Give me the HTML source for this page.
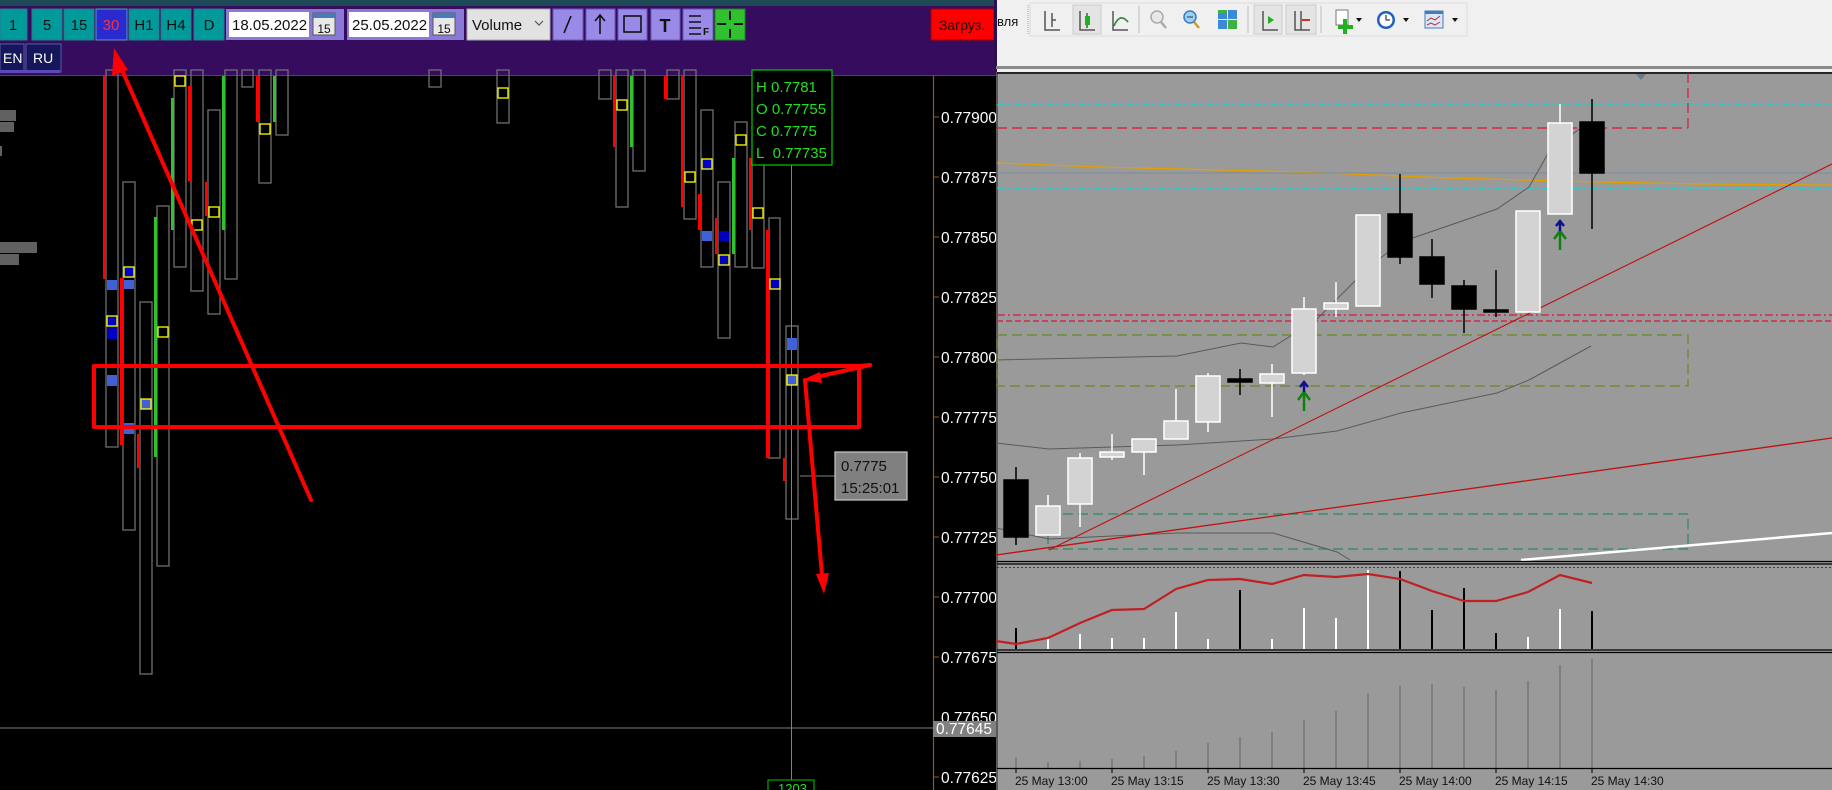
<!DOCTYPE html>
<html><head><meta charset="utf-8"><style>
html,body{margin:0;padding:0;width:1832px;height:790px;overflow:hidden;background:#000}
svg{display:block;font-family:"Liberation Sans","DejaVu Sans",sans-serif}
</style></head><body>
<svg width="1832" height="790" viewBox="0 0 1832 790" xmlns="http://www.w3.org/2000/svg">
<!-- LEFT PANEL -->
<rect x="0" y="0" width="996" height="790" fill="#000"/>
<rect x="0" y="0" width="996" height="6" fill="#1e4a58"/>
<rect x="0" y="6" width="996" height="69" fill="#360c5e"/>
<line x1="0" y1="75.5" x2="996" y2="75.5" stroke="#7a3a20" stroke-width="1"/>
<g font-size="15" text-anchor="middle" fill="#111">
<rect x="0" y="9" width="27" height="31" fill="#009a9a" stroke="#2a7a8a"/><text x="13" y="30">1</text>
<rect x="32" y="9" width="30" height="31" fill="#009a9a" stroke="#2a7a8a"/><text x="47" y="30">5</text>
<rect x="64" y="9" width="30" height="31" fill="#009a9a" stroke="#2a7a8a"/><text x="79" y="30">15</text>
<rect x="96" y="9" width="31" height="31" fill="#2a2ad0" stroke="#5a9aba"/><text x="111" y="30" fill="#ff3030">30</text>
<rect x="129" y="9" width="30" height="31" fill="#009a9a" stroke="#2a7a8a"/><text x="144" y="30">H1</text>
<rect x="161" y="9" width="30" height="31" fill="#009a9a" stroke="#2a7a8a"/><text x="176" y="30">H4</text>
<rect x="194" y="9" width="30" height="31" fill="#009a9a" stroke="#2a7a8a"/><text x="209" y="30">D</text>
</g>
<rect x="226" y="9" width="118" height="31" fill="#8a7ad8"/>
<rect x="229" y="12" width="80" height="25" fill="#fff"/>
<text x="232" y="30" font-size="15" fill="#111">18.05.2022</text>
<rect x="313" y="13" width="22" height="22" fill="#e8e8e8" stroke="#555"/><rect x="313" y="13" width="22" height="5" fill="#4a7ab8"/>
<text x="324" y="33" font-size="12" text-anchor="middle" fill="#111">15</text>
<rect x="347" y="9" width="117" height="31" fill="#8a7ad8"/>
<rect x="349" y="12" width="80" height="25" fill="#fff"/>
<text x="352" y="30" font-size="15" fill="#111">25.05.2022</text>
<rect x="433" y="13" width="22" height="22" fill="#e8e8e8" stroke="#555"/><rect x="433" y="13" width="22" height="5" fill="#4a7ab8"/>
<text x="444" y="33" font-size="12" text-anchor="middle" fill="#111">15</text>
<rect x="467" y="9" width="83" height="31" fill="#e2e2e2" stroke="#aaa"/>
<text x="472" y="30" font-size="15" fill="#111">Volume</text>
<path d="M535 21 l4 4 l4 -4" stroke="#555" fill="none" stroke-width="1.2"/>
<g fill="#9a8ae8" stroke="#6a5ab8">
<rect x="553" y="9" width="30" height="31"/><rect x="586" y="9" width="29" height="31"/>
<rect x="618" y="9" width="29" height="31"/><rect x="651" y="9" width="29" height="31"/>
<rect x="683" y="9" width="30" height="31"/></g>
<line x1="564" y1="33" x2="571" y2="16" stroke="#111" stroke-width="1.6"/>
<path d="M600 34 V15 M595 21 L600 15 L605 21" stroke="#111" fill="none" stroke-width="1.6"/>
<rect x="624" y="16" width="17" height="16" fill="none" stroke="#111" stroke-width="1.6"/>
<text x="665" y="32" font-size="18" font-weight="bold" text-anchor="middle" fill="#111">T</text>
<path d="M689 16 h12 M689 22 h12 M689 28 h12 M689 34 h12" stroke="#111" stroke-width="1.4"/>
<text x="703" y="35" font-size="10" font-weight="bold" fill="#111">F</text>
<rect x="715" y="9" width="30" height="31" fill="#30c030" stroke="#1a8a1a"/>
<path d="M730 11 v9 M730 29 v9 M717 24 h9 M734 24 h9" stroke="#111" stroke-width="2"/>
<rect x="931" y="9" width="63" height="31" fill="#ff0000" stroke="#aa0000"/>
<text x="962" y="30" font-size="14" text-anchor="middle" fill="#111">Загруз.</text>
<rect x="0" y="44" width="24" height="28" fill="#16165a" stroke="#5a5aa8"/><text x="3" y="63" font-size="14" fill="#fff">EN</text>
<rect x="26" y="44" width="35" height="28" fill="#16165a" stroke="#5a5aa8"/><text x="33" y="63" font-size="14" fill="#fff">RU</text>
<rect x="0" y="70" width="60" height="3" fill="#5a4ab8"/>

<!-- left gray profile blocks -->
<g fill="#606060"><rect x="0" y="110" width="16" height="11"/><rect x="0" y="122" width="14" height="10"/><rect x="0" y="146" width="2" height="10"/><rect x="0" y="242" width="37" height="11"/><rect x="0" y="254" width="19" height="11"/></g>

<!-- columns -->
<g fill="none" stroke="#707070" stroke-width="1.3">
<rect x="106" y="70" width="12" height="377"/>
<rect x="123" y="182" width="12" height="348"/>
<rect x="140" y="302" width="12" height="372"/>
<rect x="157" y="206" width="12" height="360"/>
<rect x="174" y="70" width="12" height="197"/>
<rect x="191" y="70" width="12" height="221"/>
<rect x="208" y="110" width="12" height="204"/>
<rect x="225" y="70" width="12" height="209"/>
<rect x="242" y="70" width="11" height="17"/>
<rect x="259" y="70" width="12" height="113"/>
<rect x="276" y="70" width="12" height="65"/>
<rect x="429" y="70" width="12" height="17"/>
<rect x="497" y="70" width="12" height="53"/>
<rect x="599" y="70" width="12" height="29"/>
<rect x="616" y="70" width="12" height="137"/>
<rect x="633" y="70" width="12" height="101"/>
<rect x="667" y="70" width="12" height="29"/>
<rect x="684" y="70" width="12" height="149"/>
<rect x="701" y="110" width="12" height="157"/>
<rect x="718" y="182" width="12" height="156"/>
<rect x="735" y="122" width="12" height="145"/>
<rect x="752" y="160" width="12" height="108"/>
<rect x="769" y="218" width="11" height="240"/>
<rect x="786" y="326" width="12" height="193"/>
</g>
<line x1="791.5" y1="165" x2="791.5" y2="790" stroke="#808080" stroke-width="1"/>
<line x1="791.5" y1="140" x2="791.5" y2="165" stroke="#808080" stroke-width="1"/>
<!-- red/green bars -->
<g fill="#ff0000">
<rect x="103" y="76" width="3" height="203"/><rect x="120" y="278" width="3" height="167"/><rect x="137" y="434" width="3" height="34"/>
<rect x="188" y="86" width="3" height="95"/><rect x="205" y="182" width="3" height="34"/><rect x="256" y="76" width="3" height="46"/>
<rect x="613" y="76" width="3" height="71"/><rect x="664" y="76" width="3" height="23"/><rect x="681" y="76" width="3" height="131"/>
<rect x="698" y="194" width="3" height="36"/><rect x="715" y="218" width="3" height="36"/><rect x="749" y="158" width="3" height="72"/>
<rect x="766" y="230" width="3" height="228"/><rect x="783" y="458" width="3" height="23"/>
</g>
<g fill="#30c030">
<rect x="154" y="217" width="3" height="240"/><rect x="171" y="98" width="3" height="132"/><rect x="222" y="76" width="3" height="154"/>
<rect x="273" y="76" width="3" height="46"/><rect x="630" y="76" width="3" height="71"/><rect x="732" y="158" width="3" height="96"/>
</g>
<!-- blue squares -->
<g fill="#4060d8"><rect x="107" y="280" width="10" height="10"/><rect x="107" y="375" width="10" height="11"/><rect x="124" y="280" width="10" height="9"/><rect x="124" y="423" width="10" height="11"/><rect x="702" y="231" width="10" height="10"/><rect x="787" y="338" width="10" height="12"/></g>
<g fill="#0000c0"><rect x="107" y="327" width="10" height="12"/><rect x="719" y="231" width="10" height="10"/></g>
<g stroke="#ffff00" stroke-width="1.3">
<rect x="107" y="316" width="10" height="10" fill="#0000c0"/><rect x="124" y="267" width="10" height="10" fill="#0000c0"/>
<rect x="141" y="399" width="10" height="10" fill="#4060d8"/><rect x="702" y="159" width="10" height="10" fill="#0000c0"/>
<rect x="719" y="255" width="10" height="10" fill="#0000c0"/><rect x="770" y="279" width="10" height="10" fill="#0000c0"/>
<rect x="787" y="375" width="10" height="10" fill="#4060d8"/>
<g fill="none"><rect x="158" y="327" width="10" height="10"/><rect x="175" y="76" width="10" height="10"/><rect x="192" y="220" width="10" height="10"/><rect x="209" y="207" width="10" height="10"/><rect x="260" y="124" width="10" height="10"/><rect x="498" y="88" width="10" height="10"/><rect x="617" y="100" width="10" height="10"/><rect x="685" y="172" width="10" height="10"/><rect x="736" y="135" width="10" height="10"/><rect x="753" y="208" width="10" height="10"/></g>
</g>
<!-- OHLC box -->
<rect x="752" y="70" width="80" height="95" fill="#000" stroke="#00cc00" stroke-width="1.2"/>
<g fill="#20e020" font-size="15"><text x="756" y="92">H 0.7781</text><text x="756" y="114">O 0.77755</text><text x="756" y="136">C 0.7775</text><text x="756" y="158">L&#160; 0.77735</text></g>
<!-- price label -->
<line x1="800" y1="476" x2="835" y2="476" stroke="#808080"/>
<rect x="835" y="452" width="72" height="48" fill="#808080" stroke="#c8c8c8" stroke-width="1.2"/>
<g fill="#111" font-size="15"><text x="841" y="471">0.7775</text><text x="841" y="493">15:25:01</text></g>
<line x1="0" y1="728" x2="933" y2="728" stroke="#808080" stroke-width="1"/>
<rect x="768" y="780" width="46" height="14" fill="#000" stroke="#00cc00"/>
<text x="778" y="793" font-size="13" fill="#20e020">1203</text>
<!-- price axis -->
<line x1="933.5" y1="76" x2="933.5" y2="790" stroke="#8a5a2a" stroke-width="1.2"/>
<g stroke="#8a5a2a"><line x1="933" y1="117" x2="939" y2="117"/><line x1="933" y1="177" x2="939" y2="177"/><line x1="933" y1="237" x2="939" y2="237"/><line x1="933" y1="297" x2="939" y2="297"/><line x1="933" y1="357" x2="939" y2="357"/><line x1="933" y1="417" x2="939" y2="417"/><line x1="933" y1="477" x2="939" y2="477"/><line x1="933" y1="537" x2="939" y2="537"/><line x1="933" y1="597" x2="939" y2="597"/><line x1="933" y1="657" x2="939" y2="657"/><line x1="933" y1="777" x2="939" y2="777"/></g>
<g fill="#fff" font-size="15.5">
<text x="941" y="123">0.77900</text><text x="941" y="183">0.77875</text><text x="941" y="243">0.77850</text><text x="941" y="303">0.77825</text><text x="941" y="363">0.77800</text><text x="941" y="423">0.77775</text><text x="941" y="483">0.77750</text><text x="941" y="543">0.77725</text><text x="941" y="603">0.77700</text><text x="941" y="663">0.77675</text><text x="941" y="723">0.77650</text><text x="941" y="783">0.77625</text>
</g>
<rect x="933" y="721" width="63" height="16" fill="#808080"/>
<text x="936" y="734" fill="#fff" font-size="15.5">0.77645</text>

<!-- red annotations -->
<g stroke="#ff0000" stroke-width="4" fill="none" stroke-linejoin="round" stroke-linecap="round">
<rect x="94" y="366" width="765" height="61"/>
<line x1="859" y1="366" x2="870" y2="365"/>
<line x1="870" y1="365" x2="812" y2="378"/>
<line x1="805" y1="380" x2="822" y2="575"/>
<line x1="122" y1="70" x2="311" y2="500"/>
</g>
<g fill="#ff0000">
<polygon points="802,380 820,372 822,383"/>
<polygon points="824,594 816,574 829,573"/>
<polygon points="114,48 128,70 112,76"/>
</g>

<!-- RIGHT PANEL -->
<rect x="996" y="0" width="836" height="72" fill="#f0f0f0"/>
<rect x="994" y="0" width="3" height="72" fill="#2a1050"/>
<text x="997" y="26" font-size="13" fill="#111">вля</text>
<line x1="1028" y1="5" x2="1028" y2="34" stroke="#aaa" stroke-dasharray="1,1"/>
<rect x="1030" y="3" width="437" height="33" fill="none" stroke="#ddd"/>
<rect x="1073" y="5" width="28" height="29" fill="#e4e4e4" stroke="#ccc"/>
<rect x="1254" y="5" width="28" height="29" fill="#e4e4e4" stroke="#ccc"/>
<rect x="1286" y="5" width="30" height="29" fill="#e4e4e4" stroke="#ccc"/>
<g stroke="#bbb"><line x1="1139" y1="6" x2="1139" y2="33"/><line x1="1248" y1="6" x2="1248" y2="33"/><line x1="1321" y1="6" x2="1321" y2="33"/></g>
<g stroke="#555" fill="none" stroke-width="1.5">
<path d="M1045 11 V30 H1060 M1052 13 v14 M1052 20 h4"/>
<path d="M1080 11 V30 H1095 M1087 13 v15"/>
<path d="M1113 11 V30 H1128 M1114 26 Q1120 12 1128 22"/>
<path d="M1263 11 V30 H1278"/>
<path d="M1295 11 V30 H1310 M1301 11 v19"/>
</g>
<rect x="1085" y="16" width="5" height="9" fill="#20b020"/>
<path d="M1114 26 Q1120 12 1128 22" stroke="#3a8a3a" fill="none" stroke-width="1.5"/>
<circle cx="1157" cy="17" r="6" fill="#e8e8e8" stroke="#aaa" stroke-width="1.5"/><line x1="1161" y1="22" x2="1166" y2="28" stroke="#aaa" stroke-width="2.5"/>
<circle cx="1190" cy="17" r="6" fill="#9ad0f0" stroke="#3a7ac0" stroke-width="1.5"/><line x1="1194" y1="22" x2="1199" y2="28" stroke="#c8a030" stroke-width="2.5"/><line x1="1187" y1="17" x2="1193" y2="17" stroke="#335"/>
<rect x="1218" y="10" width="9" height="9" fill="#3a8ad8"/><rect x="1228" y="10" width="9" height="9" fill="#3a8ad8"/><rect x="1218" y="20" width="9" height="9" fill="#3a8ad8"/><rect x="1228" y="20" width="9" height="9" fill="#40b040"/><rect x="1218" y="10" width="9" height="3" fill="#40b040"/>
<polygon points="1268,16 1274,20 1268,24" fill="#20b020"/>
<line x1="1302" y1="20" x2="1310" y2="20" stroke="#d03020" stroke-width="2"/>
<rect x="1336" y="10" width="12" height="15" fill="#fff" stroke="#777"/>
<path d="M1345 19 v15 M1338 27 h15" stroke="#20b020" stroke-width="4"/>
<polygon points="1356,18 1362,18 1359,22" fill="#111"/>
<circle cx="1386" cy="20" r="9" fill="#2060c0"/><circle cx="1386" cy="20" r="6.5" fill="#fff"/><path d="M1386 15 V20 H1390" stroke="#111" fill="none"/>
<polygon points="1403,18 1409,18 1406,22" fill="#111"/>
<rect x="1425" y="11" width="18" height="17" fill="#d8e8f8" stroke="#4a7ab8"/><rect x="1425" y="11" width="18" height="3" fill="#4a7ab8"/>
<path d="M1427 21 l4 -3 l4 2 l5 -4 M1427 25 l4 -2 l4 2 l5 -3" stroke="#c03030" fill="none"/>
<polygon points="1452,18 1458,18 1455,22" fill="#111"/>
<rect x="996" y="66" width="836" height="3" fill="#8a8a8a"/>
<!-- chart bg -->
<rect x="997" y="72" width="835" height="718" fill="#9a9a9a"/>
<rect x="996" y="72" width="2" height="718" fill="#5a5a5a"/>
<line x1="997" y1="73" x2="1832" y2="73" stroke="#000" stroke-width="1.5"/>
<polygon points="1636,74 1646,74 1641,80" fill="#6a7a8a"/>
<!-- levels -->
<line x1="997" y1="105" x2="1832" y2="105" stroke="#00e0e0" stroke-width="1.3" stroke-dasharray="8,3,2,3"/>
<line x1="997" y1="128" x2="1688" y2="128" stroke="#dc143c" stroke-width="1.3" stroke-dasharray="10,5"/>
<line x1="1688" y1="73" x2="1688" y2="128" stroke="#dc143c" stroke-width="1.2" stroke-dasharray="10,5"/>
<polyline points="997,163 1100,167 1300,172 1450,178 1600,182 1700,184 1832,185" stroke="#e0a000" stroke-width="1.3" fill="none"/>
<line x1="997" y1="173" x2="1832" y2="173" stroke="#7a8aa0" stroke-width="1"/>
<line x1="997" y1="188" x2="1832" y2="188" stroke="#00e0e0" stroke-width="1.3" stroke-dasharray="8,3,2,3"/>
<line x1="997" y1="315" x2="1832" y2="315" stroke="#dc143c" stroke-width="1.2" stroke-dasharray="8,3,2,3"/>
<line x1="997" y1="321" x2="1832" y2="321" stroke="#dc143c" stroke-width="1.2" stroke-dasharray="6,3"/>
<rect x="997" y="335" width="691" height="51" fill="none" stroke="#6a8a20" stroke-width="1.2" stroke-dasharray="10,5"/>
<rect x="1048" y="514" width="640" height="35" fill="none" stroke="#2a8a5a" stroke-width="1.2" stroke-dasharray="10,5"/>
<!-- MAs -->
<g fill="none" stroke="#5a5a5a" stroke-width="1">
<polyline points="996,360 1177,356 1241,343 1273,347 1316,320 1369,267 1401,242 1497,209 1529,187 1550,150 1588,123"/>
<polyline points="996,443 1049,449 1177,445 1273,439 1337,431 1401,413 1497,393 1529,380 1591,346"/>
<polyline points="996,528 1049,539 1177,533 1273,533 1337,552 1350,560"/>
</g>
<line x1="1049" y1="550" x2="1832" y2="164" stroke="#c01010" stroke-width="1.1"/>
<line x1="996" y1="555" x2="1832" y2="438" stroke="#c01010" stroke-width="1.3"/>
<line x1="1521" y1="560" x2="1832" y2="533" stroke="#fff" stroke-width="2.5"/>
<!-- candles -->
<g stroke-width="1.5">
<g stroke="#000"><line x1="1016" y1="467" x2="1016" y2="545"/><line x1="1240" y1="369" x2="1240" y2="395"/><line x1="1400" y1="174" x2="1400" y2="264"/><line x1="1432" y1="239" x2="1432" y2="298"/><line x1="1464" y1="280" x2="1464" y2="333"/><line x1="1496" y1="270" x2="1496" y2="317"/><line x1="1592" y1="99" x2="1592" y2="229"/></g>
<g stroke="#fff"><line x1="1048" y1="495" x2="1048" y2="535"/><line x1="1080" y1="453" x2="1080" y2="527"/><line x1="1112" y1="434" x2="1112" y2="460"/><line x1="1144" y1="439" x2="1144" y2="475"/><line x1="1176" y1="389" x2="1176" y2="439"/><line x1="1208" y1="373" x2="1208" y2="432"/><line x1="1272" y1="364" x2="1272" y2="417"/><line x1="1304" y1="297" x2="1304" y2="375"/><line x1="1336" y1="282" x2="1336" y2="317"/><line x1="1560" y1="104" x2="1560" y2="214"/></g>
<g fill="#000" stroke="#000"><rect x="1004" y="480" width="24" height="57"/><rect x="1228" y="379" width="24" height="3"/><rect x="1388" y="214" width="24" height="43"/><rect x="1420" y="257" width="24" height="27"/><rect x="1452" y="286" width="24" height="23"/><rect x="1484" y="310" width="24" height="2"/><rect x="1580" y="122" width="24" height="51"/></g>
<g fill="#d3d3d3" stroke="#fff"><rect x="1036" y="506" width="24" height="29"/><rect x="1068" y="458" width="24" height="46"/><rect x="1100" y="452" width="24" height="5"/><rect x="1132" y="439" width="24" height="13"/><rect x="1164" y="421" width="24" height="18"/><rect x="1196" y="376" width="24" height="46"/><rect x="1260" y="374" width="24" height="9"/><rect x="1292" y="309" width="24" height="64"/><rect x="1324" y="303" width="24" height="6"/><rect x="1356" y="215" width="24" height="91"/><rect x="1516" y="211" width="24" height="101"/><rect x="1548" y="123" width="24" height="91"/></g>
</g>
<!-- signal arrows -->
<g stroke-width="2.5" fill="none"><path d="M1304 411 V393 M1298 400 L1304 392 L1310 400" stroke="#108010"/><path d="M1304 392 V383 M1300 387 L1304 382 L1308 387" stroke="#101090"/>
<path d="M1560 250 V232 M1554 239 L1560 231 L1566 239" stroke="#108010"/><path d="M1560 231 V222 M1556 226 L1560 221 L1564 226" stroke="#101090"/></g>
<!-- separators -->
<line x1="997" y1="561.5" x2="1832" y2="561.5" stroke="#000" stroke-width="1.2"/>
<line x1="997" y1="564" x2="1832" y2="564" stroke="#000" stroke-width="1.2"/>
<line x1="997" y1="567.5" x2="1832" y2="567.5" stroke="#106010" stroke-width="1" stroke-dasharray="2,2"/>
<line x1="997" y1="650" x2="1832" y2="650" stroke="#000" stroke-width="1.2"/>
<line x1="997" y1="652.5" x2="1832" y2="652.5" stroke="#000" stroke-width="1.2"/>
<!-- histogram -->
<g stroke-width="2">
<g stroke="#000"><line x1="1016" y1="649" x2="1016" y2="628"/><line x1="1240" y1="649" x2="1240" y2="590"/><line x1="1400" y1="649" x2="1400" y2="571"/><line x1="1432" y1="649" x2="1432" y2="610"/><line x1="1464" y1="649" x2="1464" y2="588"/><line x1="1496" y1="649" x2="1496" y2="633"/><line x1="1592" y1="649" x2="1592" y2="611"/></g>
<g stroke="#fff"><line x1="1048" y1="649" x2="1048" y2="638"/><line x1="1080" y1="649" x2="1080" y2="634"/><line x1="1112" y1="649" x2="1112" y2="638"/><line x1="1144" y1="649" x2="1144" y2="638"/><line x1="1176" y1="649" x2="1176" y2="612"/><line x1="1208" y1="649" x2="1208" y2="639"/><line x1="1272" y1="649" x2="1272" y2="639"/><line x1="1304" y1="649" x2="1304" y2="608"/><line x1="1336" y1="649" x2="1336" y2="618"/><line x1="1368" y1="649" x2="1368" y2="570"/><line x1="1528" y1="649" x2="1528" y2="637"/><line x1="1560" y1="649" x2="1560" y2="609"/></g>
</g>
<polyline points="996,641 1016,644 1048,638 1080,623 1112,610 1144,609 1176,589 1208,580 1240,579 1272,584 1304,575 1336,577 1368,574 1400,579 1432,591 1464,601 1496,601 1528,592 1560,575 1592,583" fill="none" stroke="#c02020" stroke-width="2.2"/>
<!-- volumes -->
<g stroke="#777" stroke-width="1.6">
<line x1="1016" y1="768" x2="1016" y2="757"/><line x1="1048" y1="768" x2="1048" y2="762"/><line x1="1080" y1="768" x2="1080" y2="761"/><line x1="1112" y1="768" x2="1112" y2="759"/><line x1="1144" y1="768" x2="1144" y2="756"/><line x1="1176" y1="768" x2="1176" y2="751"/><line x1="1208" y1="768" x2="1208" y2="743"/><line x1="1240" y1="768" x2="1240" y2="737"/><line x1="1272" y1="768" x2="1272" y2="732"/><line x1="1304" y1="768" x2="1304" y2="720"/><line x1="1336" y1="768" x2="1336" y2="711"/><line x1="1368" y1="768" x2="1368" y2="693"/><line x1="1400" y1="768" x2="1400" y2="686"/><line x1="1432" y1="768" x2="1432" y2="684"/><line x1="1464" y1="768" x2="1464" y2="687"/><line x1="1496" y1="768" x2="1496" y2="690"/><line x1="1528" y1="768" x2="1528" y2="681"/><line x1="1560" y1="768" x2="1560" y2="665"/><line x1="1592" y1="768" x2="1592" y2="659"/>
</g>
<!-- time axis -->
<line x1="997" y1="768.5" x2="1832" y2="768.5" stroke="#000" stroke-width="1.2"/>
<g stroke="#000"><line x1="1016" y1="768" x2="1016" y2="773"/><line x1="1112" y1="768" x2="1112" y2="773"/><line x1="1208" y1="768" x2="1208" y2="773"/><line x1="1304" y1="768" x2="1304" y2="773"/><line x1="1400" y1="768" x2="1400" y2="773"/><line x1="1496" y1="768" x2="1496" y2="773"/><line x1="1592" y1="768" x2="1592" y2="773"/></g>
<g font-size="12" fill="#111">
<text x="1015" y="785">25 May 13:00</text><text x="1111" y="785">25 May 13:15</text><text x="1207" y="785">25 May 13:30</text><text x="1303" y="785">25 May 13:45</text><text x="1399" y="785">25 May 14:00</text><text x="1495" y="785">25 May 14:15</text><text x="1591" y="785">25 May 14:30</text>
</g>
</svg>
</body></html>
